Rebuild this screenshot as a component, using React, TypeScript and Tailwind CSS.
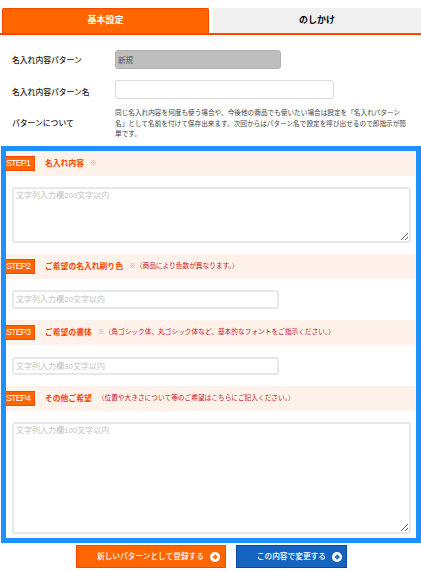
const jp = "font-['Liberation_Sans','Noto_Sans_CJK_JP',sans-serif]";

const StepHeader = ({ step, title, mark, note }: { step: string; title: string; mark?: string; note?: string }) => (
  <div className="flex h-[25px] items-center bg-[#fef2ea]">
    <span className="flex h-[15px] w-[29px] items-center border border-l-0 border-[#ff4500] bg-[#ff6600] text-[9px] leading-none tracking-[-0.9px] text-white shadow-[1px_1px_0_#fff]">
      {step}
    </span>
    <span className="ml-[10px] text-[7.8px] font-bold leading-none text-[#ff4500]">{title}</span>
    {mark && <span className="ml-[6px] text-[6.8px] leading-none text-[#d9a48c]">{mark}</span>}
    {note && <span className="text-[6.7px] leading-none text-[#c8202a]">{note}</span>}
  </div>
);

const fieldClass =
  "block rounded-[3px] border-2 border-[#e8e8e8] bg-white px-[2px] text-[8px] text-black outline-none placeholder:text-[#c4c4c4]";

export default function App() {
  return (
    <div className={`h-[572px] w-[421px] overflow-hidden bg-white ${jp}`}>
      {/* tabs */}
      <div className="flex h-[35px] gap-[4px] border-b-[2px] border-[#ff4500] pt-[8px] pl-[2px]">
        <div className="flex w-[207px] items-center justify-center rounded-t-[2px] border-x border-t border-[#ff4500] bg-[#ff6600] text-[9px] font-bold text-white">
          基本設定
        </div>
        <div className="flex flex-1 items-center justify-center bg-[#f0f0f0] text-[9px] font-bold text-black">
          のしかけ
        </div>
      </div>

      {/* pattern info */}
      <div className="h-[111px] pl-[12px] text-[7.8px] font-medium text-[#222]">
        <div className="flex items-center pt-[15px]">
          <span className="mt-[2px] w-[103px]">名入れ内容パターン</span>
          <input
            disabled
            defaultValue="新規"
            className="h-[19px] w-[166px] rounded-[3px] border border-[#b0b0b0] bg-[#bebebe] px-[2px] text-[7.5px] text-[#666]"
          />
        </div>
        <div className="flex items-center pt-[11px]">
          <span className="mt-[6px] w-[103px]">名入れ内容パターン名</span>
          <input className="h-[19px] w-[219px] rounded-[3px] border border-[#dcdcdc] bg-white" />
        </div>
        <div className="flex items-center pt-[9px]">
          <span className="w-[103px]">パターンについて</span>
          <p className="w-[292px] text-[6.65px] font-normal leading-[10.7px] text-[#444]">
            同じ名入れ内容を何度も使う場合や、今後他の商品でも使いたい場合は設定を「名入れパターン名」として名前を付けて保存出来ます。次回からはパターン名で設定を呼び出せるので即指示が簡単です。
          </p>
        </div>
      </div>

      {/* steps */}
      <div className="ml-[1px] h-[397px] border-[5px] border-[#1e90ff]">
        <StepHeader step="STEP1" title="名入れ内容" mark="※" />
        <div className="pt-[11px] pl-[6px]">
          <textarea placeholder="文字列入力欄200文字以内" className={`${fieldClass} h-[56px] w-[399px] py-[1px]`} />
        </div>
        <div className="mt-[11px]">
          <StepHeader step="STEP2" title="ご希望の名入れ刷り色" mark="※" note="（商品により色数が異なります。）" />
        </div>
        <div className="pt-[11px] pl-[6px]">
          <input placeholder="文字列入力欄20文字以内" className={`${fieldClass} h-[19px] w-[267px]`} />
        </div>
        <div className="mt-[11px]">
          <StepHeader step="STEP3" title="ご希望の書体" mark="※" note="（角ゴシック体、丸ゴシック体など、基本的なフォントをご指示ください。）" />
        </div>
        <div className="pt-[12px] pl-[6px]">
          <input placeholder="文字列入力欄30文字以内" className={`${fieldClass} h-[18px] w-[267px]`} />
        </div>
        <div className="mt-[11px]">
          <StepHeader step="STEP4" title="その他ご希望" mark=" " note="（位置や大きさについて等のご希望はこちらにご記入ください。）" />
        </div>
        <div className="pt-[11px] pl-[6px]">
          <textarea placeholder="文字列入力欄100文字以内" className={`${fieldClass} h-[112px] w-[399px] py-[1px]`} />
        </div>
      </div>

      {/* buttons */}
      <div className="mt-[2px] flex gap-[10px] pl-[76px]">
        <button className="flex h-[23px] w-[150px] items-center justify-end border border-[#ff4500] bg-[#ff6600] pr-[5px] text-[7.7px] font-medium text-white">
          新しいパターンとして登録する
          <Arrow color="text-[#ff6600]" />
        </button>
        <button className="flex h-[23px] w-[111px] items-center justify-end border border-[#0d47a1] bg-[#1565c0] pr-[4px] text-[7.7px] font-medium text-white">
          この内容で変更する
          <Arrow color="text-[#1565c0]" />
        </button>
      </div>
    </div>
  );
}

const Arrow = ({ color }: { color: string }) => (
  <svg viewBox="0 0 20 20" className={`ml-[6px] h-[10px] w-[10px] ${color}`}>
    <circle cx="10" cy="10" r="10" fill="#fff" />
    <path d="M5 10h7M9 5.5 13.5 10 9 14.5" fill="none" stroke="currentColor" strokeWidth="3.4" />
  </svg>
);
